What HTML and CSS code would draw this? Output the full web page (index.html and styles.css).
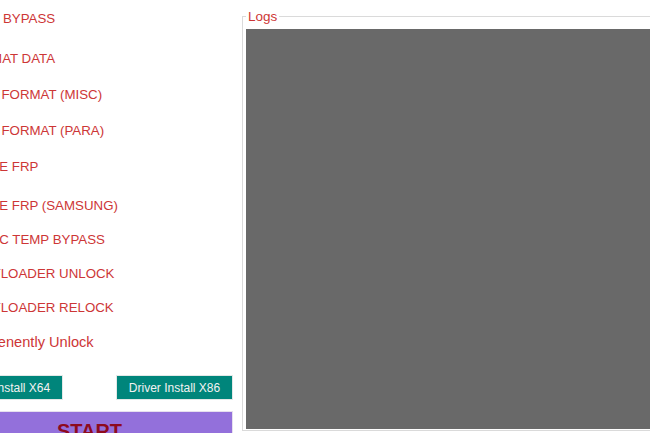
FILE: index.html
```html
<!DOCTYPE html>
<html lang="en">
<head>
<meta charset="utf-8">
<title>Tool</title>
<link rel="stylesheet" href="styles.css">
</head>
<body>
<div class="window">
  <div class="ops">
    <ul class="op-list">
      <li class="op">AUTH BYPASS</li>
      <li class="op">FORMAT DATA</li>
      <li class="op">SAFE FORMAT (MISC)</li>
      <li class="op">SAFE FORMAT (PARA)</li>
      <li class="op">ERASE FRP</li>
      <li class="op">ERASE FRP (SAMSUNG)</li>
      <li class="op">MI ACC TEMP BYPASS</li>
      <li class="op">BOOTLOADER UNLOCK</li>
      <li class="op">BOOTLOADER RELOCK</li>
      <li class="op op-lg">Permenently Unlock</li>
    </ul>
    <div class="drivers">
      <button class="btn-driver">Driver Install X64</button>
      <button class="btn-driver">Driver Install X86</button>
    </div>
    <button class="btn-start">START</button>
  </div>
  <fieldset class="logs">
    <legend class="logs-title">Logs</legend>
    <div class="log-box"></div>
  </fieldset>
</div>
</body>
</html>
```

FILE: styles.css
```css
html, body {
  margin: 0;
  padding: 0;
  background: #ffffff;
  overflow: hidden;
}

.window {
  width: 650px;
  height: 433px;
  display: flex;
  align-items: flex-start;
  gap: 10px;
  font-family: "Liberation Sans", Arial, sans-serif;
}

/* left column: operations list, driver buttons and start */
.ops {
  flex: none;
  width: 285px;
  margin-left: -53px;
  padding-top: 11px;
  display: flex;
  flex-direction: column;
}

.op-list {
  list-style: none;
  margin: 0;
  padding: 0 0 0 16px;
  display: flex;
  flex-direction: column;
  gap: 20px;
}

.op {
  font-size: 13.3px;
  line-height: 15px;
  color: #cd3636;
  white-space: nowrap;
}

.op-lg {
  font-size: 14.6px;
}

.op:nth-child(2) { margin-top: 4.5px; }
.op:nth-child(3) { margin-top: 1px; }
.op:nth-child(4) { margin-top: 1.5px; }
.op:nth-child(5) { margin-top: 0.5px; }
.op:nth-child(6) { margin-top: 4px; }
.op:nth-child(7),
.op:nth-child(8),
.op:nth-child(9) { margin-top: -1px; }

.drivers {
  margin-top: 26.5px;
  display: flex;
  justify-content: space-between;
}

.btn-driver {
  width: 115px;
  height: 23px;
  padding: 0;
  border: none;
  background: #00857b;
  color: #f2f2f2;
  font-family: "Liberation Sans", Arial, sans-serif;
  font-size: 12px;
  box-shadow: 0 0 0 1px #e3e8e7;
}

.btn-start {
  margin-top: 13px;
  height: 38px;
  padding: 0;
  border: none;
  background: #9370db;
  color: #8e0a1e;
  font-family: "Liberation Sans", Arial, sans-serif;
  font-size: 20px;
  font-weight: bold;
  box-shadow: 0 0 0 1px #e6e0ee;
}

/* log group */
.logs {
  flex: none;
  width: 420px;
  margin: 9px 0 0 0;
  padding: 5px 0 1px 3px;
  border: 1px solid #dadada;
  min-width: 0;
}

.logs-title {
  padding: 0 2px;
  font-size: 13.5px;
  line-height: 15px;
  color: #cd3636;
}

.log-box {
  height: 400px;
  background: #696969;
}
```
